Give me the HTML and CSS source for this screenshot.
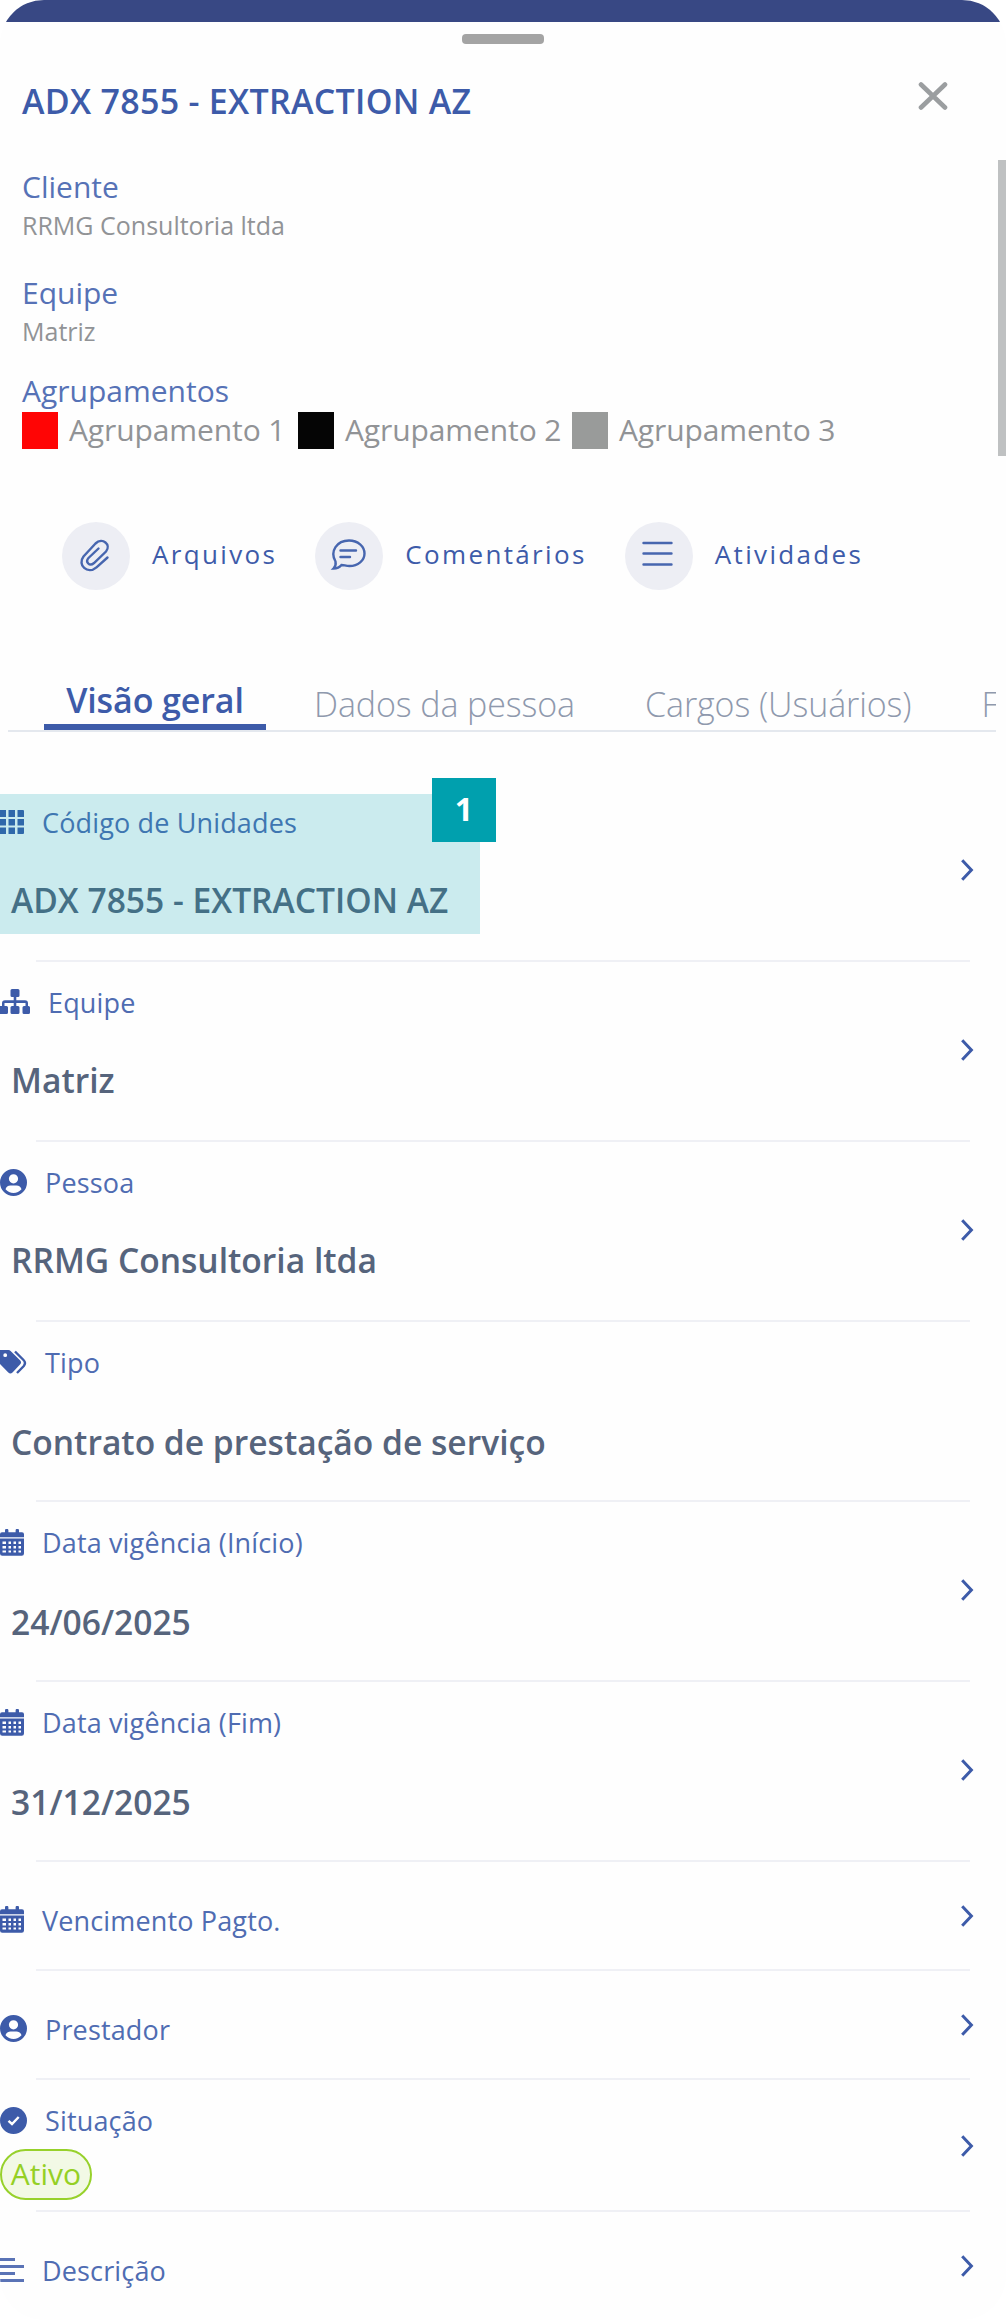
FILE: index.html
```html
<!DOCTYPE html>
<html lang="pt-BR">
<head>
  <meta charset="UTF-8">
  <meta name="viewport" content="width=device-width, initial-scale=1.0">
  <title>ADX 7855 - EXTRACTION AZ</title>
  <link rel="stylesheet" href="styles.css">
</head>
<body>
  <!-- Shared icons -->
  <svg class="sprite" width="0" height="0">
    <symbol id="chevron" viewBox="0 0 14 24">
      <path d="M2.2 2.2L11.4 12L2.2 21.8" fill="none" stroke="currentColor" stroke-width="3"/>
    </symbol>
    <symbol id="user" viewBox="0 0 27 27">
      <path fill-rule="evenodd" fill="currentColor" d="M13.5 0a13.5 13.5 0 1 1 0 27a13.5 13.5 0 0 1 0-27zM13.5 5.2a4.6 4.6 0 1 0 0 9.2a4.6 4.6 0 0 0 0-9.2zM10.5 16.6c-2.6 0-4.4 1.5-5 3.7a10.5 10.5 0 0 0 16 0c-.6-2.2-2.4-3.7-5-3.7z"/>
    </symbol>
    <symbol id="calendar" viewBox="0 0 24 27">
      <path fill-rule="evenodd" fill="currentColor" d="M5 1.5a1.5 1.5 0 0 1 3.4 0v1.800h7.200V1.500a1.500 1.500 0 0 1 3.400 0v1.800h3a2 2 0 0 1 2 2v2.900H0V5.300a2 2 0 0 1 2-2h3zM0 9.500h24v15a2.300 2.300 0 0 1-2.300 2.300H2.300A2.300 2.300 0 0 1 0 24.500zM2.500 12.500v2.500h3.500v-2.500zM8.500 12.500v2.500h2.500v-2.500zM13.500 12.500v2.500h2.500v-2.500zM18.500 12.500v2.500h2.500v-2.500zM2.500 17v2.500h3.500v-2.500zM8.500 17v2.500h2.500v-2.500zM13.500 17v2.500h2.500v-2.500zM18.500 17v2.500h2.500v-2.500zM2.500 21.500v2h3.500v-2zM8.500 21.500v2h2.500v-2zM13.500 21.500v2h2.500v-2zM18.500 21.500v2h2.500v-2z"/>
    </symbol>
  </svg>

  <div class="sheet">
    <div class="topbar"></div>
    <div class="handle"></div>
    <div class="scrollbar"></div>

    <header class="header">
      <div class="title-row">
        <h1>ADX 7855 - EXTRACTION AZ</h1>
        <svg class="close" width="30" height="30" viewBox="0 0 30 30"><path d="M3 3.500L27 26.500M27 3.500L3 26.500" fill="none" stroke="currentColor" stroke-width="4.600" stroke-linecap="round"/></svg>
      </div>
      <div class="info">
        <h2>Cliente</h2>
        <p>RRMG Consultoria ltda</p>
      </div>
      <div class="info">
        <h2>Equipe</h2>
        <p>Matriz</p>
      </div>
      <div class="info groups">
        <h2>Agrupamentos</h2>
        <ul>
          <li><span class="swatch red"></span>Agrupamento 1</li>
          <li><span class="swatch black"></span>Agrupamento 2</li>
          <li><span class="swatch gray"></span>Agrupamento 3</li>
        </ul>
      </div>
    </header>

    <div class="actions">
      <a class="action">
        <span class="circle">
          <svg width="34" height="34" viewBox="0 0 34 34"><path d="M28.500 18.500L17.500 28.300C8.500 36-2 26 4.500 17.500L16.500 4.500C23.500-2 32.500 5.500 27 12.500L15 24C10.500 28 6 23 9.500 19L19.500 9.500"/></svg>
        </span>
        Arquivos
      </a>
      <a class="action">
        <span class="circle">
          <svg width="34" height="34" viewBox="0 0 34 34"><path d="M1.500 29.500C3.500 27.500 4 25 3.500 22.500C-2.500 12 5 1.500 17 1.500C26 1.500 32.500 7.500 32.500 14.500S26 27 17.500 27C14 27 12 26 9.500 26C7.500 28.500 4.500 29.500 1.500 29.500zM8.500 11.500H24M8.500 18H18"/></svg>
        </span>
        Comentários
      </a>
      <a class="action">
        <span class="circle">
          <svg width="34" height="34" viewBox="0 0 34 34"><path d="M1.500 4H29.500M1.500 14.500H29.500M1.500 25.500H29.500"/></svg>
        </span>
        Atividades
      </a>
    </div>

    <nav class="tabs">
      <a class="tab active">Visão geral</a>
      <a class="tab">Dados da pessoa</a>
      <a class="tab">Cargos (Usuários)</a>
      <a class="tab">F</a>
    </nav>

    <main class="list">
      <div class="row highlighted">
        <div class="field">
          <div class="label">
            <svg width="24" height="24" viewBox="0 0 24 24"><path fill="currentColor" d="M-1 0h7v7h-7zM8.500 0h6.500v7H8.500zM17.500 0H23a1 1 0 0 1 1 1v6h-6.500zM-1 9h7v6.500h-7zM8.500 9h6.500v6.500H8.500zM17.500 9H24v6.500h-6.500zM-1 17.500h7v6.500h-7zM8.500 17.500h6.500v6.500H8.500zM17.500 17.500H24v5.500a1 1 0 0 1-1 1h-5.500z"/></svg>
            Código de Unidades
          </div>
          <div class="value">ADX 7855 - EXTRACTION AZ</div>
        </div>
        <svg class="arrow"><use href="#chevron"/></svg>
        <span class="badge">1</span>
      </div>
      <div class="row">
        <div class="field">
          <div class="label">
            <svg width="30" height="26" viewBox="0 0 30 26"><path fill="currentColor" d="M12 0h6a1.500 1.500 0 0 1 1.500 1.500v5A1.500 1.500 0 0 1 18 8h-1.700v3.300H25a3 3 0 0 1 3 3V17h.5a1.500 1.500 0 0 1 1.500 1.500v5a1.500 1.500 0 0 1-1.500 1.500H24a1.500 1.500 0 0 1-1.500-1.500v-5A1.500 1.500 0 0 1 24 17h1.500v-3H16.300v3H18a1.500 1.500 0 0 1 1.500 1.500v5A1.500 1.500 0 0 1 18 25h-6a1.500 1.500 0 0 1-1.500-1.500v-5A1.500 1.500 0 0 1 12 17h1.700v-3H4.500v3H6.500A1.500 1.500 0 0 1 8 18.500v5A1.500 1.500 0 0 1 6.500 25H0v-8h2v-2.700a3 3 0 0 1 3-3h8.700V8H12a1.500 1.500 0 0 1-1.500-1.500v-5A1.500 1.500 0 0 1 12 0z"/></svg>
            Equipe
          </div>
          <div class="value">Matriz</div>
        </div>
        <svg class="arrow"><use href="#chevron"/></svg>
      </div>
      <div class="row">
        <div class="field">
          <div class="label"><svg width="27" height="27"><use href="#user"/></svg>Pessoa</div>
          <div class="value">RRMG Consultoria ltda</div>
        </div>
        <svg class="arrow"><use href="#chevron"/></svg>
      </div>
      <div class="row low">
        <div class="field">
          <div class="label">
            <svg width="27" height="24" viewBox="0 0 27 24"><path fill-rule="evenodd" fill="currentColor" d="M0 0H8.500a3 3 0 0 1 2.100.9L20 10.300a3 3 0 0 1 0 4.200L12.500 22.500a3 3 0 0 1-4.200 0L0 14zM5.200 3.300a1.900 1.900 0 1 0 0 3.800a1.900 1.900 0 0 0 0-3.800z"/><path d="M15 1.500L23.500 10a4.500 4.500 0 0 1 .3 6L17 23" fill="none" stroke="currentColor" stroke-width="2.400"/></svg>
            Tipo
          </div>
          <div class="value">Contrato de prestação de serviço</div>
        </div>
      </div>
      <div class="row low">
        <div class="field">
          <div class="label"><svg width="24" height="27"><use href="#calendar"/></svg>Data vigência (Início)</div>
          <div class="value">24/06/2025</div>
        </div>
        <svg class="arrow"><use href="#chevron"/></svg>
      </div>
      <div class="row low">
        <div class="field">
          <div class="label"><svg width="24" height="27"><use href="#calendar"/></svg>Data vigência (Fim)</div>
          <div class="value">31/12/2025</div>
        </div>
        <svg class="arrow"><use href="#chevron"/></svg>
      </div>
      <div class="row single">
        <div class="label"><svg width="24" height="27"><use href="#calendar"/></svg>Vencimento Pagto.</div>
        <svg class="arrow"><use href="#chevron"/></svg>
      </div>
      <div class="row single">
        <div class="label"><svg width="27" height="27"><use href="#user"/></svg>Prestador</div>
        <svg class="arrow"><use href="#chevron"/></svg>
      </div>
      <div class="row status-row">
        <div class="field">
          <div class="label">
            <svg width="27" height="27" viewBox="0 0 27 27"><circle cx="13.500" cy="13.500" r="13.500" fill="currentColor"/><path d="M8.500 13.800L12 17L18.700 10" fill="none" stroke="#fff" stroke-width="2.400"/></svg>
            Situação
          </div>
          <span class="status">Ativo</span>
        </div>
        <svg class="arrow"><use href="#chevron"/></svg>
      </div>
      <div class="row single last">
        <div class="label">
          <svg width="24" height="26" viewBox="0 0 24 26"><path d="M0 2.500H15M0 9.500H24M0 16.500H15M0 23.500H24" fill="none" stroke="currentColor" stroke-width="3.200" opacity=".85"/></svg>
          Descrição
        </div>
        <svg class="arrow"><use href="#chevron"/></svg>
      </div>
    </main>
  </div>
</body>
</html>
```
FILE: styles.css
```css
* {
  box-sizing: border-box;
}

body {
  margin: 0;
  background-color: #fff;
  font-family: "Open Sans", sans-serif;
}

h1, h2, p, ul {
  margin: 0;
  padding: 0;
}

.sprite {
  position: absolute;
}

.sheet {
  position: relative;
  height: 2320px;
  background-color: #fefefe;
  border-radius: 44px;
  overflow: hidden;
}

.topbar {
  height: 22px;
  background-color: #384884;
}

.handle {
  width: 82px;
  height: 10px;
  margin: 12px auto 0;
  border-radius: 4px;
  background-color: #a4a4a4;
}

.scrollbar {
  position: absolute;
  top: 160px;
  right: 0;
  width: 8px;
  height: 296px;
  background-color: #bfc1c2;
}

/* Header */
.header {
  padding: 33px 22px 0;
}

.title-row {
  display: flex;
  justify-content: space-between;
  margin-bottom: 44px;
}

h1 {
  color: #3d5ba9;
  font-size: 34px;
  font-weight: 600;
  line-height: 48px;
  letter-spacing: 0.28px;
}

.close {
  margin: 4px 36px 0 0;
  color: #9b9ea0;
}

.info {
  margin-bottom: 34px;
}

.info h2 {
  color: #5672b6;
  font-size: 30px;
  font-weight: 400;
  line-height: 36px;
}

.info p {
  margin-top: 4px;
  color: #919396;
  font-size: 25px;
  line-height: 32px;
}

.groups {
  margin: -8px 0 0;
}

.groups ul {
  display: grid;
  grid-template-columns: 276px 274px auto;
  margin-top: 2px;
  list-style: none;
}

.groups li {
  display: flex;
  align-items: center;
  gap: 11px;
  color: #919396;
  font-size: 30px;
  line-height: 38px;
  letter-spacing: -0.1px;
}

.swatch {
  width: 36px;
  height: 37px;
}

.red {
  background-color: #ff0505;
}

.black {
  background-color: #050505;
}

.gray {
  background-color: #999b9a;
}

/* Action buttons */
.actions {
  display: flex;
  gap: 38px;
  margin-top: 73px;
  padding-left: 62px;
}

.action {
  display: flex;
  align-items: center;
  gap: 22px;
  height: 68px;
  color: #3d5ba9;
  font-size: 26px;
  letter-spacing: 2.35px;
  line-height: 64px;
  align-items: flex-start;
}

.circle {
  display: flex;
  align-items: center;
  justify-content: center;
  width: 68px;
  height: 68px;
  border-radius: 50%;
  background-color: #edeef4;
}

.circle svg {
  overflow: visible;
  fill: none;
  stroke: #4766af;
  stroke-width: 2.4;
  stroke-linecap: round;
}

/* Tabs */
.tabs {
  display: flex;
  align-items: flex-end;
  gap: 70px;
  height: 60px;
  margin: 82px 10px 0 8px;
  padding-left: 36px;
  border-bottom: 2px solid #e4e8ee;
  overflow: hidden;
}

.tab {
  flex-shrink: 0;
  color: #8f99ad;
  font-size: 34px;
  font-weight: 300;
  line-height: 52px;
  letter-spacing: -0.1px;
}

.tab.active {
  width: 222px;
  margin-right: -22px;
  border-bottom: 6px solid #3d5ba9;
  color: #3d5ba9;
  font-weight: 600;
  line-height: 48px;
  text-align: center;
}

/* Field list */
.list {
  margin-top: 50px;
}

.row {
  position: relative;
  display: flex;
  justify-content: space-between;
  align-items: center;
  height: 180px;
  padding: 0 32px 4px 0;
}

.row::after {
  content: "";
  position: absolute;
  bottom: 0;
  left: 36px;
  right: 36px;
  height: 2px;
  background-color: #eff0f5;
}

.last::after {
  display: none;
}

.field {
  align-self: flex-start;
  padding-top: 21px;
}

.label {
  display: flex;
  align-items: center;
  gap: 18px;
  color: #4f6cb2;
  font-size: 27px;
  line-height: 40px;
  letter-spacing: 0.15px;
}

.label svg {
  margin-top: -2px;
  color: #3d5ba9;
}

.value {
  margin-top: 33px;
  padding-left: 11px;
  color: #56647c;
  font-size: 33.6px;
  font-weight: 600;
  line-height: 48px;
}

.low .value {
  margin-top: 35px;
}

.arrow {
  width: 14px;
  height: 24px;
  color: #3d5ba9;
}

.highlighted::before {
  content: "";
  position: absolute;
  top: 12px;
  left: 0;
  width: 480px;
  height: 140px;
  background-color: rgba(0, 160, 174, 0.2);
}

.badge {
  position: absolute;
  top: -4px;
  left: 432px;
  width: 64px;
  height: 64px;
  background-color: #00a0ae;
  color: #fff;
  font-size: 32px;
  font-weight: 700;
  line-height: 62px;
  text-align: center;
}

.single {
  height: 109px;
  padding-bottom: 2px;
}

.single .label {
  padding-top: 10px;
}

.status-row {
  height: 132px;
  padding-bottom: 0;
}

.status {
  display: block;
  width: 92px;
  height: 51px;
  margin-top: 8px;
  border: 2px solid #97d12b;
  border-radius: 26px;
  background-color: #f2f9e5;
  color: #95d024;
  font-size: 30px;
  font-weight: 500;
  line-height: 45px;
  text-align: center;
}
```
